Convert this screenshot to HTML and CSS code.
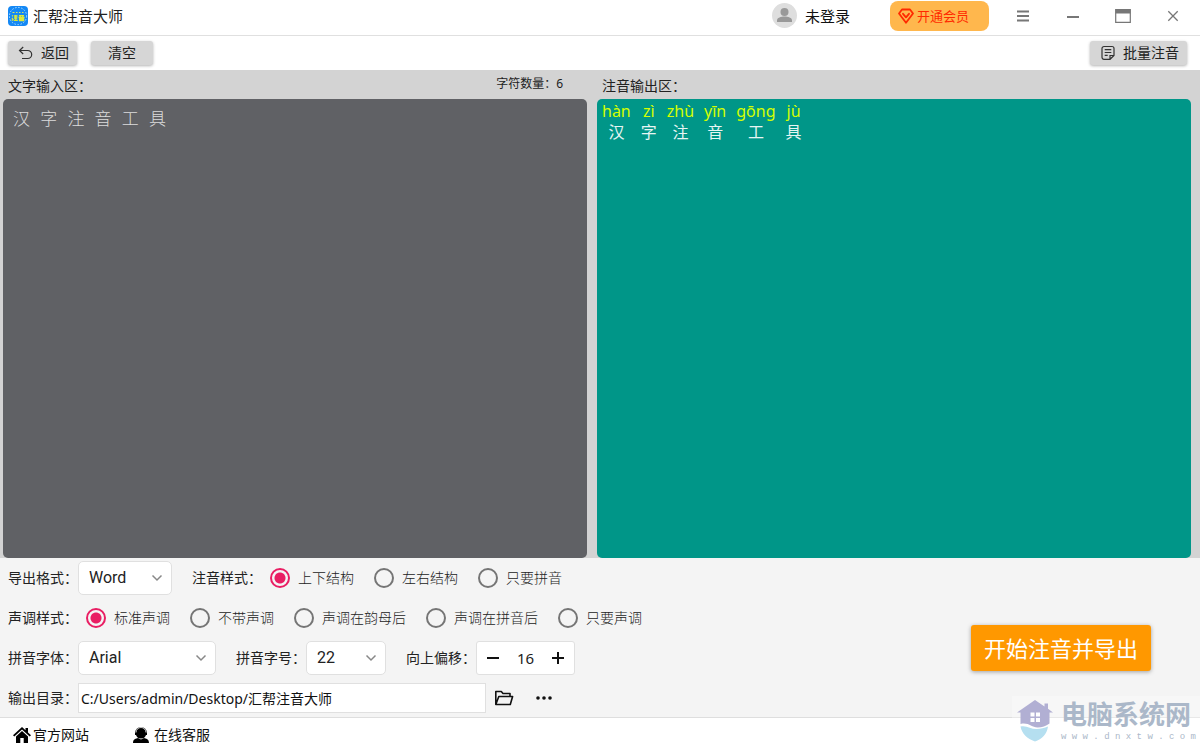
FILE: index.html
```html
<!DOCTYPE html>
<html lang="zh-CN">
<head>
<meta charset="utf-8">
<meta name="viewport" content="width=device-width, initial-scale=1">
<title>汇帮注音大师</title>
<link rel="stylesheet" href="styles.css">
</head>
<body>
<div class="app">
  <header class="titlebar">
    <svg class="logo" viewBox="0 0 20 20" aria-hidden="true">
      <rect width="20" height="20" rx="4" fill="#1488f5"/>
      <circle cx="10" cy="10" r="8.6" fill="none" stroke="#a9dcff" stroke-width="1" stroke-dasharray="1.6 1.5"/>
      <path d="M4.500 6.500h2M8 6.500h1.500M11 6.500h1.500M14 6.500h1.500" stroke="#d9e65c" stroke-width="1"/>
      <path d="M4 9.500l1 .8M3.800 12l1 .6M4 14.500l1.300-1.500M6 10h3.500M6 12h3.300M5.800 14.400h4M7.800 9v5.400M11 9.600h5M12.300 9.600v1.500M14.700 9.600v1.500M10.600 11.300h6M11.600 12.400h4v2.200h-4zM11.600 13.500h4" fill="none" stroke="#dce93c" stroke-width="1.300"/>
    </svg>
    <h1 class="app-name">汇帮注音大师</h1>
    <button class="account" type="button">
      <svg class="avatar" viewBox="0 0 25 25" aria-hidden="true">
        <circle cx="12.500" cy="12.500" r="12.500" fill="#dedede"/>
        <circle cx="12.500" cy="9" r="4" fill="#999"/>
        <path d="M5 19v-1.500c0-3 4-4 7.500-4s7.500 1 7.500 4V19z" fill="#999"/>
      </svg>
      <span>未登录</span>
    </button>
    <button class="vip" type="button">
      <svg class="vip-icon" viewBox="0 0 16 16" fill="none" stroke="#ff2a00" stroke-width="1.800" stroke-linejoin="round" stroke-linecap="round" aria-hidden="true">
        <path d="M4 1.500h8l3 4L8 14.800 1 5.500z"/><path d="M5 5.800l3 3.500 3-3.500"/>
      </svg>
      <span>开通会员</span>
    </button>
    <nav class="window-buttons" aria-label="窗口">
      <button type="button" aria-label="菜单"><svg viewBox="0 0 18 18"><path d="M3 4.500h12M3 9h12M3 13.500h12" stroke="#777" stroke-width="1.800"/></svg></button>
      <button type="button" aria-label="最小化"><svg viewBox="0 0 18 18"><path d="M3 10h12" stroke="#777" stroke-width="2"/></svg></button>
      <button type="button" aria-label="最大化"><svg viewBox="0 0 18 18"><path d="M1.700 2.700h14.600v12.600H1.700z" fill="none" stroke="#777" stroke-width="1.200"/><path d="M1.500 2.500h15v4h-15z" fill="#777"/></svg></button>
      <button type="button" aria-label="关闭"><svg viewBox="0 0 18 18"><path d="M4.300 4.300l9.400 9.400M13.700 4.300l-9.400 9.400" stroke="#777" stroke-width="1.300"/></svg></button>
    </nav>
  </header>

  <div class="toolbar">
    <button class="tool back" type="button">
      <svg viewBox="0 0 16 16" fill="none" stroke="#333" stroke-width="1.200" aria-hidden="true"><path d="M5.200 2L1.500 5.500l3.700 3.500M1.500 5.500h8.200a4 4 0 0 1 0 8H4"/></svg>
      <span>返回</span>
    </button>
    <button class="tool clear" type="button">清空</button>
    <button class="tool batch" type="button">
      <svg viewBox="0 0 16 16" fill="none" stroke="#333" stroke-width="1.200" aria-hidden="true"><path d="M10 14.300H4a2 2 0 0 1-2-2V3.500a2 2 0 0 1 2-2h8a2 2 0 0 1 2 2v7zM10 14.300v-3.800h4M4.700 4.700h6.600M4.700 7.500h6.600M4.700 10.300h3"/></svg>
      <span>批量注音</span>
    </button>
  </div>

  <main class="workspace">
    <section class="pane">
      <div class="pane-head">
        <label for="source">文字输入区：</label>
        <span class="count">字符数量：6</span>
      </div>
      <textarea id="source" class="source" spellcheck="false">汉 字 注 音 工 具</textarea>
    </section>
    <section class="pane">
      <div class="pane-head"><h2>注音输出区：</h2></div>
      <div class="result">
        <div class="syllable"><span class="pinyin">hàn</span><span>汉</span></div>
        <div class="syllable"><span class="pinyin">zì</span><span>字</span></div>
        <div class="syllable"><span class="pinyin">zhù</span><span>注</span></div>
        <div class="syllable"><span class="pinyin">yīn</span><span>音</span></div>
        <div class="syllable"><span class="pinyin">gōng</span><span>工</span></div>
        <div class="syllable"><span class="pinyin">jù</span><span>具</span></div>
      </div>
    </section>
  </main>

  <form class="settings">
    <div class="rows">
      <div class="row">
        <div class="field">
          <label class="caption" for="format">导出格式：</label>
          <div class="select select-format">
            <select id="format"><option>Word</option></select>
            <svg viewBox="0 0 12 12"><path d="M1.500 3.500L6 8l4.500-4.500" fill="none" stroke="#888" stroke-width="1.500"/></svg>
          </div>
        </div>
        <div class="field" role="radiogroup" aria-labelledby="layout-caption">
          <span class="caption" id="layout-caption">注音样式：</span>
          <div class="options">
            <label><input type="radio" name="layout" checked>上下结构</label>
            <label><input type="radio" name="layout">左右结构</label>
            <label><input type="radio" name="layout">只要拼音</label>
          </div>
        </div>
      </div>
      <div class="row">
        <div class="field" role="radiogroup" aria-labelledby="tone-caption">
          <span class="caption" id="tone-caption">声调样式：</span>
          <div class="options">
            <label><input type="radio" name="tone" checked>标准声调</label>
            <label><input type="radio" name="tone">不带声调</label>
            <label><input type="radio" name="tone">声调在韵母后</label>
            <label><input type="radio" name="tone">声调在拼音后</label>
            <label><input type="radio" name="tone">只要声调</label>
          </div>
        </div>
      </div>
      <div class="row">
        <div class="field">
          <label class="caption" for="font">拼音字体：</label>
          <div class="select select-font">
            <select id="font"><option>Arial</option></select>
            <svg viewBox="0 0 12 12"><path d="M1.500 3.500L6 8l4.500-4.500" fill="none" stroke="#888" stroke-width="1.500"/></svg>
          </div>
        </div>
        <div class="field">
          <label class="caption" for="size">拼音字号：</label>
          <div class="select select-size">
            <select id="size"><option>22</option></select>
            <svg viewBox="0 0 12 12"><path d="M1.500 3.500L6 8l4.500-4.500" fill="none" stroke="#888" stroke-width="1.500"/></svg>
          </div>
        </div>
        <div class="field">
          <label class="caption" for="offset">向上偏移：</label>
          <div class="stepper">
            <button type="button" aria-label="减少"><svg viewBox="0 0 12 12"><path d="M0 6h12" stroke="#111" stroke-width="2"/></svg></button>
            <input id="offset" type="text" inputmode="numeric" value="16">
            <button type="button" aria-label="增加"><svg viewBox="0 0 12 12"><path d="M0 6h12M6 0v12" stroke="#111" stroke-width="2"/></svg></button>
          </div>
        </div>
      </div>
      <div class="row">
        <div class="field">
          <label class="caption" for="path">输出目录：</label>
          <input id="path" class="path" type="text" value="C:/Users/admin/Desktop/汇帮注音大师">
          <button class="icon-button" type="button" aria-label="打开文件夹"><svg viewBox="0 0 20 20" fill="none" stroke="#111" stroke-width="1.600" stroke-linejoin="round"><path d="M1.800 16.500V3.500h5.500l1.700 2h7v3M1.800 16.500L4.800 8.500h13.800l-2.300 8z"/></svg></button>
          <button class="icon-button more" type="button" aria-label="更多"><svg viewBox="0 0 20 20" fill="#111"><circle cx="4" cy="10" r="1.800"/><circle cx="10" cy="10" r="1.800"/><circle cx="16" cy="10" r="1.800"/></svg></button>
        </div>
      </div>
    </div>
    <button class="export" type="button">开始注音并导出</button>
  </form>

  <footer class="footer">
    <a href="#site"><svg viewBox="0 0 18 18" aria-hidden="true"><path d="M9 1L0 9.300l1.300 1.300L9 3.600l7.700 7L18 9.300l-3-2.800V2h-2.500v2.200z"/><path d="M9 5l-6 5.500V17h4.300v-5h3.400v5H15v-6.500z"/></svg>官方网站</a>
    <a class="support" href="#support"><svg viewBox="0 0 18 18" aria-hidden="true"><path d="M3 7a6 6 0 0 1 12 0v2h-1a5.300 5.300 0 0 1-10 0H3z"/><path d="M4 6.500a5 5 0 0 1 10 0" fill="none" stroke="#fff" stroke-width=".8"/><path d="M1 17c0-4 3-4.500 5-5l3 1.500 3-1.500c2 .5 5 1 5 5z"/></svg>在线客服</a>
  </footer>

  <div class="watermark">
    <svg viewBox="0 0 36 42" aria-hidden="true">
      <path d="M18 0L0 12.500h3.500V24c8-2 11 3.500 17 3.500 5 0 8-1.500 12-4v-11H36l-5-3.700V3.500h-3.500V6.500z" fill="#b1afd3"/>
      <path d="M13.500 12.500h4v4h-4zM19 12.500h4v4h-4zM13.500 18h4v4h-4zM19 18h4v4h-4z" fill="#fff"/>
      <path d="M3.500 26.500c6-1.500 10 2.500 16 2.500 4 0 8-1 11.500-2.500C30 34 25 39 18 41.500 10 38.500 5 34 3.500 26.500z" fill="#b5dff0"/>
    </svg>
    <div class="watermark-text"><span class="watermark-name">电脑系统网</span><span class="watermark-url">w w w . d n x t w . c o m</span></div>
  </div>
</div>
</body>
</html>
```
FILE: styles.css
```css
* { box-sizing: border-box; }

body {
  margin: 0;
  font-family: "Noto Sans", "Noto Sans CJK SC", sans-serif;
  font-size: 14px;
  line-height: 20px;
  color: #222;
}

button, input, select, textarea { font: inherit; color: inherit; }

button { border: 0; padding: 0; background: none; cursor: pointer; }

h1, h2 { margin: 0; font-size: inherit; font-weight: 400; }

svg { display: block; flex: none; }

.app {
  position: relative;
  display: flex;
  flex-direction: column;
  min-height: 100vh;
  background: #fff;
}

.titlebar {
  display: flex;
  align-items: center;
  height: 36px;
  padding: 0 2px 4px 8px;
  border-bottom: 1px solid #e0e0e0;
  font-size: 15px;
}

.logo { width: 20px; height: 20px; margin-right: 5px; }

.account {
  display: flex;
  align-items: center;
  gap: 8px;
  margin-left: auto;
  color: #111;
}

.avatar { width: 25px; height: 25px; }

.vip {
  display: flex;
  align-items: center;
  gap: 3px;
  height: 30px;
  margin: 0 9px 0 40px;
  padding: 0 20px 0 8px;
  border-radius: 8px;
  background: #ffb74d;
  color: #ff2a00;
  font-size: 13px;
}

.vip-icon { width: 16px; height: 16px; }

.window-buttons { display: flex; }

.window-buttons button {
  display: grid;
  place-items: center;
  width: 50px;
  height: 30px;
}

.window-buttons svg { width: 18px; height: 18px; }

.toolbar {
  display: flex;
  gap: 14px;
  align-items: center;
  height: 34px;
  padding: 0 13px 0 8px;
}

.tool {
  display: flex;
  align-items: center;
  justify-content: center;
  gap: 7px;
  height: 24px;
  padding: 0 8px;
  border-radius: 3px;
  background: #d6d6d6;
  box-shadow: 0 1px 3px #0000004d;
}

.tool svg { width: 16px; height: 16px; }

.back { padding-left: 10px; }

.clear { padding: 0 17px; }

.batch { margin-left: auto; padding-left: 10px; }

.workspace {
  flex: 1;
  display: grid;
  grid-template-columns: 584fr 594fr;
  gap: 10px;
  padding: 0 9px 0 3px;
  background: #d3d3d3;
}

.pane { display: flex; flex-direction: column; }

.pane-head {
  display: flex;
  justify-content: space-between;
  height: 29px;
  padding: 6px 24px 0 5px;
}

.count { font-size: 12px; line-height: 16px; }

.source {
  flex: 1;
  width: 100%;
  padding: 10px;
  border: 0;
  border-radius: 5px;
  outline: 0;
  resize: none;
  background: #606165;
  color: #dcdcdc;
  font-family: "Liberation Mono", "Noto Sans CJK SC", monospace;
  font-size: 17px;
  font-weight: 300;
  line-height: 24px;
}

.result {
  flex: 1;
  display: flex;
  align-items: flex-start;
  gap: 10px;
  padding: 2px 5px;
  border-radius: 5px;
  background: #009688;
  color: #e6f5f3;
  font-size: 16px;
  line-height: 21px;
}

.syllable { display: flex; flex-direction: column; align-items: center; }

.pinyin { color: #d4ff00; }

.settings {
  display: flex;
  align-items: flex-end;
  justify-content: space-between;
  padding: 0 49px 0 8px;
  background: #f4f4f4;
  border-bottom: 1px solid #dedede;
}

.rows { margin-bottom: -1px; }

.row { display: flex; align-items: center; gap: 20px; height: 40px; }

.field { display: flex; align-items: center; }

.caption { width: 70px; }

.options { display: flex; gap: 20px; padding-left: 8px; font-weight: 300; }

.options label { display: flex; align-items: center; gap: 8px; }

.options input {
  appearance: none;
  width: 20px;
  height: 20px;
  margin: 0;
  border: 2px solid #757575;
  border-radius: 50%;
}

.options input:checked {
  border-color: #e91e63;
  background: radial-gradient(circle, #e91e63 5px, transparent 6px);
}

.select { position: relative; font-family: Roboto, sans-serif; font-size: 16px; }

.select select {
  appearance: none;
  width: 100%;
  height: 34px;
  padding: 0 10px;
  border: 1px solid #e0e0e0;
  border-radius: 5px;
  background: #fff;
}

.select svg {
  position: absolute;
  top: 11px;
  right: 9px;
  width: 12px;
  height: 12px;
  pointer-events: none;
}

.select-format { width: 94px; }
.select-font { width: 138px; }
.select-size { width: 80px; }

.stepper {
  display: flex;
  width: 99px;
  height: 34px;
  border: 1px solid #e0e0e0;
  border-radius: 3px;
  background: #fff;
}

.stepper button { display: grid; place-items: center; width: 32px; }

.stepper svg { width: 12px; height: 12px; }

.stepper input {
  flex: 1;
  min-width: 0;
  padding: 0;
  border: 0;
  background: none;
  text-align: center;
  font-size: 15px;
}

.path {
  width: 408px;
  height: 30px;
  margin-right: 8px;
  padding: 0 2px;
  border: 1px solid #e0e0e0;
  background: #fff;
  color: #111;
}

.icon-button svg { width: 20px; height: 20px; }

.more { margin-left: 20px; }

.export {
  height: 46px;
  margin-bottom: 46px;
  padding: 0 13px;
  border-radius: 3px;
  background: #ff9800;
  box-shadow: 0 1px 4px #00000059;
  color: #fff;
  font-size: 22px;
}

.footer {
  display: flex;
  gap: 43px;
  align-items: center;
  height: 29px;
  padding: 4px 13px 0;
}

.footer a {
  display: flex;
  align-items: center;
  gap: 2px;
  color: #111;
  text-decoration: none;
}

.footer .support { gap: 4px; }

.footer svg { width: 18px; height: 18px; }

.watermark {
  position: absolute;
  right: 0;
  bottom: 0;
  display: flex;
  gap: 8px;
  padding: 4px 4px 4px 5px;
  background: #ffffff4d;
  pointer-events: none;
}

.watermark svg { width: 36px; height: 42px; }

.watermark-text { display: flex; flex-direction: column; color: #abb8c9; }

.watermark-name {
  font-family: "Liberation Sans", "Noto Sans CJK SC", sans-serif;
  font-size: 26px;
  font-weight: 700;
  line-height: 31px;
}

.watermark-url {
  font-family: "Liberation Mono", monospace;
  font-size: 9px;
  line-height: 12px;
}
```
